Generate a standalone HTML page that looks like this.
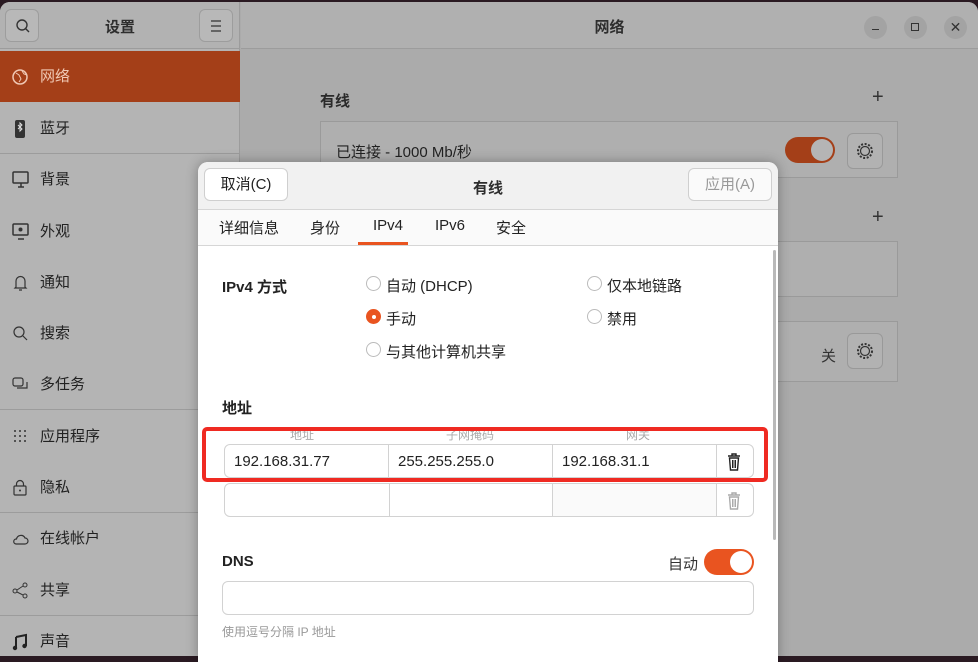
<!DOCTYPE html>
<html><head><meta charset="utf-8"><style>
*{box-sizing:border-box;margin:0;padding:0}
body{width:978px;height:656px;overflow:hidden;background:#2a1a22;font-family:"Liberation Sans","Noto Sans CJK SC",sans-serif;position:relative;color:#222}
.win{position:absolute;left:0;top:2px;width:978px;height:654px;background:#ababab;border-radius:10px 10px 0 0;overflow:hidden}
.side{position:absolute;left:0;top:0;width:240px;height:654px;background:#b4b4b4;border-right:1px solid #9c9c9c}
.sh{height:47px;border-bottom:1px solid #9c9c9c;background:#b2b2b2;position:relative}
.btn{position:absolute;width:34px;height:33px;border:1px solid #9d9d9d;border-radius:6px;background:#b8b8b8}
.sh .t{position:absolute;left:0;width:240px;top:14px;text-align:center;font-size:15px;font-weight:bold;color:#2e2e2e}
.row{position:absolute;left:0;width:240px;height:51px;font-size:15px;color:#222}
.row span{position:absolute;left:40px;top:14px}
.row svg{position:absolute;left:12px;top:17px}
.sep{position:absolute;left:0;width:240px;height:1px;background:#9c9c9c}
.mh{position:absolute;left:241px;top:0;right:0;height:47px;border-bottom:1px solid #9c9c9c;background:#b0b0b0}
.card{position:absolute;left:320px;width:578px;border:1px solid #9a9a9a;background:#afafaf}
.gear{position:absolute;width:36px;height:36px;border:1px solid #999;border-radius:6px;background:#b2b2b2}
.dlg{position:absolute;left:198px;top:162px;width:580px;height:500px;background:#fff;border-radius:10px 10px 0 0;overflow:hidden;box-shadow:0 0 12px rgba(0,0,0,.3)}
.dh{height:48px;background:#f1f1f1;border-bottom:1px solid #d6d6d6;position:relative}
.db{position:absolute;top:6px;height:33px;border:1px solid #cfcfcf;border-radius:6px;background:#fff;font-size:15px;text-align:center;line-height:31px}
.tabs{height:36px;background:#fafafa;border-bottom:1px solid #d6d6d6;position:relative;font-size:15px}
.tabs span{position:absolute;top:7px}
.radio{position:absolute;width:15px;height:15px;border:1px solid #bbb;border-radius:50%;background:#fff}
.lbl{position:absolute;font-size:15px}
.inp{position:absolute;border:1px solid #d2d2d2;background:#fff;font-size:15px}
</style></head><body>
<div class="win">
<div class="side">
 <div class="sh">
  <div class="btn" style="left:5px;top:7px"><svg width="34" height="33"><circle cx="16" cy="15" r="5" fill="none" stroke="#333" stroke-width="1.4"/><line x1="19.5" y1="18.5" x2="23" y2="22" stroke="#333" stroke-width="1.4"/></svg></div>
  <div class="t">设置</div>
  <div class="btn" style="left:199px;top:7px"><svg width="34" height="33"><path d="M11 11h10M11 16h10M11 21h10" stroke="#333" stroke-width="1.3"/></svg></div>
 </div>
 <div class="row" style="top:49px;background:#a43f18;color:#f0c8b4"><svg width="20" height="20"><circle cx="8" cy="9" r="7" fill="none" stroke="#f0c8b4" stroke-width="1.5"/><path d="M4 5l3 2 2 4-2 3M10 3l2 3 3 1" stroke="#f0c8b4" fill="none"/></svg><span>网络</span></div>
 <div class="row" style="top:101px"><svg width="20" height="20"><rect x="3" y="0" width="10" height="18" rx="2" fill="#333"/><path d="M6 5l4 4-2 2V3l2 2-4 4" stroke="#ddd" fill="none"/></svg><span>蓝牙</span></div>
 <div class="sep" style="top:151px"></div>
 <div class="row" style="top:152px"><svg width="20" height="20"><rect x="1" y="1" width="15" height="11" rx="1" fill="none" stroke="#333" stroke-width="1.5"/><path d="M6 16h6M9 12v4" stroke="#333" stroke-width="1.5"/></svg><span>背景</span></div>
 <div class="row" style="top:204px"><svg width="20" height="20"><rect x="1" y="1" width="15" height="11" rx="1" fill="none" stroke="#333" stroke-width="1.5"/><circle cx="8.5" cy="6.5" r="2" fill="#333"/><path d="M6 16h6" stroke="#333" stroke-width="1.5"/></svg><span>外观</span></div>
 <div class="row" style="top:255px"><svg width="20" height="20"><path d="M4 13V7a4.5 4.5 0 019 0v6l1 1H3zM7 16h3" fill="none" stroke="#333" stroke-width="1.2"/></svg><span>通知</span></div>
 <div class="row" style="top:306px"><svg width="20" height="20"><circle cx="7" cy="7" r="5" fill="none" stroke="#333" stroke-width="1.2"/><line x1="11" y1="11" x2="15" y2="15" stroke="#333" stroke-width="1.2"/></svg><span>搜索</span></div>
 <div class="row" style="top:357px"><svg width="20" height="20"><rect x="1" y="2" width="10" height="8" rx="2" fill="none" stroke="#333" stroke-width="1.2"/><path d="M5 12h10V6" fill="none" stroke="#333" stroke-width="1.2"/></svg><span>多任务</span></div>
 <div class="sep" style="top:407px"></div>
 <div class="row" style="top:409px"><svg width="20" height="20"><g fill="#333"><circle cx="3" cy="3" r="1"/><circle cx="8" cy="3" r="1"/><circle cx="13" cy="3" r="1"/><circle cx="3" cy="8" r="1"/><circle cx="8" cy="8" r="1"/><circle cx="13" cy="8" r="1"/><circle cx="3" cy="13" r="1"/><circle cx="8" cy="13" r="1"/><circle cx="13" cy="13" r="1"/></g></svg><span>应用程序</span></div>
 <div class="row" style="top:460px"><svg width="20" height="20"><rect x="2" y="7" width="12" height="9" rx="1" fill="none" stroke="#333" stroke-width="1.2"/><path d="M4.5 7V5a3.5 3.5 0 017 0v2" fill="none" stroke="#333" stroke-width="1.2"/><circle cx="8" cy="11.5" r="1" fill="#333"/></svg><span>隐私</span></div>
 <div class="sep" style="top:510px"></div>
 <div class="row" style="top:511px"><svg width="20" height="20"><path d="M4 14h9a3 3 0 000-6 4.5 4.5 0 00-8.5 1A2.5 2.5 0 004 14z" fill="none" stroke="#333" stroke-width="1.2"/></svg><span>在线帐户</span></div>
 <div class="row" style="top:563px"><svg width="20" height="20"><circle cx="3" cy="9" r="2" fill="none" stroke="#333"/><circle cx="13" cy="3" r="2" fill="none" stroke="#333"/><circle cx="13" cy="14" r="2" fill="none" stroke="#333"/><path d="M5 8l6-4M5 10l6 3" stroke="#333"/></svg><span>共享</span></div>
 <div class="sep" style="top:613px"></div>
 <div class="row" style="top:614px"><svg width="20" height="20"><path d="M4 4l10-2v11M4 4v11" stroke="#222" stroke-width="2" fill="none"/><circle cx="3" cy="15" r="2.2" fill="#222"/><circle cx="12.5" cy="13" r="2.2" fill="#222"/></svg><span>声音</span></div>
</div>
<div class="mh">
 <div style="position:absolute;left:0;width:737px;top:14px;text-align:center;font-size:15px;font-weight:bold;color:#2e2e2e">网络</div>
 <div style="position:absolute;left:623px;top:14px;width:23px;height:23px;border-radius:50%;background:#a3a3a3"><div style="position:absolute;left:8px;top:13px;width:7px;height:1.4px;background:#333"></div></div>
 <div style="position:absolute;left:663px;top:14px;width:23px;height:23px;border-radius:50%;background:#a3a3a3"><div style="position:absolute;left:7px;top:7px;width:8px;height:8px;border:1.4px solid #333"></div></div>
 <div style="position:absolute;left:703px;top:14px;width:23px;height:23px;border-radius:50%;background:#a3a3a3;text-align:center;line-height:22px;font-size:14px;color:#333">✕</div>
</div>
<div style="position:absolute;left:320px;top:88px;font-size:15px;font-weight:bold;color:#2a2a2a">有线</div>
<div style="position:absolute;left:872px;top:84px;font-size:20px;color:#333">+</div>
<div class="card" style="top:119px;height:57px">
 <div style="position:absolute;left:15px;top:19px;font-size:15px">已连接 - 1000 Mb/秒</div>
 <div style="position:absolute;left:464px;top:15px;width:50px;height:26px;border-radius:13px;background:#a43f18"><div style="position:absolute;right:2px;top:2px;width:22px;height:22px;border-radius:50%;background:#b5b5b5"></div></div>
 <div class="gear" style="left:526px;top:11px"><svg width="36" height="36"><circle cx="17" cy="17" r="7" fill="none" stroke="#333" stroke-width="2" stroke-dasharray="2 1.6"/><circle cx="17" cy="17" r="4.5" fill="none" stroke="#333" stroke-width="1.2"/></svg></div>
</div>
<div style="position:absolute;left:872px;top:204px;font-size:20px;color:#333">+</div>
<div class="card" style="top:239px;height:56px"></div>
<div class="card" style="top:319px;height:61px">
 <div style="position:absolute;left:500px;top:23px;font-size:15px;color:#333">关</div>
 <div class="gear" style="left:526px;top:11px"><svg width="36" height="36"><circle cx="17" cy="17" r="7" fill="none" stroke="#333" stroke-width="2" stroke-dasharray="2 1.6"/><circle cx="17" cy="17" r="4.5" fill="none" stroke="#333" stroke-width="1.2"/></svg></div>
</div>
</div>

<div class="dlg">
 <div class="dh">
  <div class="db" style="left:6px;width:84px;color:#222">取消(C)</div>
  <div style="position:absolute;left:0;width:580px;top:15px;text-align:center;font-size:15px;font-weight:bold;color:#2e2e2e">有线</div>
  <div class="db" style="left:490px;width:84px;color:#999;background:#fafafa">应用(A)</div>
 </div>
 <div class="tabs">
  <span style="left:21px">详细信息</span><span style="left:112px">身份</span><span style="left:175px">IPv4</span><span style="left:237px">IPv6</span><span style="left:298px">安全</span>
  <div style="position:absolute;left:160px;top:32px;width:50px;height:3px;background:#e95420"></div>
 </div>
 <div style="position:absolute;right:2px;top:88px;width:3px;height:290px;background:#b9b9b9;border-radius:2px"></div>
 <div class="lbl" style="left:24px;top:114px;font-weight:bold">IPv4 方式</div>
 <div class="radio" style="left:168px;top:114px"></div><div class="lbl" style="left:188px;top:113px">自动 (DHCP)</div>
 <div class="radio" style="left:389px;top:114px"></div><div class="lbl" style="left:409px;top:113px">仅本地链路</div>
 <div class="radio" style="left:168px;top:147px;background:#e95420;border-color:#e95420"><div style="position:absolute;left:4.5px;top:4.5px;width:4px;height:4px;border-radius:50%;background:#fff"></div></div><div class="lbl" style="left:188px;top:146px">手动</div>
 <div class="radio" style="left:389px;top:147px"></div><div class="lbl" style="left:409px;top:146px">禁用</div>
 <div class="radio" style="left:168px;top:180px"></div><div class="lbl" style="left:188px;top:179px">与其他计算机共享</div>
 <div class="lbl" style="left:24px;top:235px;font-weight:bold">地址</div>
 <div style="position:absolute;left:92px;top:264px;font-size:12px;color:#aaa">地址</div>
 <div style="position:absolute;left:248px;top:264px;font-size:12px;color:#aaa">子网掩码</div>
 <div style="position:absolute;left:428px;top:264px;font-size:12px;color:#aaa">网关</div>
 <div class="inp" style="left:26px;top:282px;width:530px;height:34px;border-radius:6px">
  <div style="position:absolute;left:0;top:0;width:164px;height:32px;border-right:1px solid #d2d2d2;padding:8px 0 0 9px">192.168.31.77</div>
  <div style="position:absolute;left:164px;top:0;width:164px;height:32px;border-right:1px solid #d2d2d2;padding:8px 0 0 9px">255.255.255.0</div>
  <div style="position:absolute;left:328px;top:0;width:164px;height:32px;border-right:1px solid #d2d2d2;padding:8px 0 0 9px">192.168.31.1</div>
  <svg style="position:absolute;left:501px;top:8px" width="16" height="18"><path d="M2 3h12M6 3V1h4v2M3.5 5h9l-1 12h-7z" fill="none" stroke="#222" stroke-width="1.4"/><path d="M6.5 7v8M8 7v8M9.5 7v8" stroke="#222"/></svg>
 </div>
 <div class="inp" style="left:26px;top:321px;width:530px;height:34px;border-radius:6px">
  <div style="position:absolute;left:164px;top:0;width:164px;height:32px;border-left:1px solid #d2d2d2;border-right:1px solid #d2d2d2"></div>
  <div style="position:absolute;left:328px;top:0;width:164px;height:32px;background:#fafafa;border-right:1px solid #d2d2d2"></div>
  <svg style="position:absolute;left:501px;top:8px" width="16" height="18"><path d="M2 3h12M6 3V1h4v2M3.5 5h9l-1 12h-7z" fill="none" stroke="#aaa" stroke-width="1.4"/><path d="M6.5 7v8M8 7v8M9.5 7v8" stroke="#aaa"/></svg>
 </div>
 <div style="position:absolute;left:4px;top:265px;width:566px;height:55px;border:4px solid #ef2a22;border-radius:5px"></div>
 <div class="lbl" style="left:24px;top:391px;font-weight:bold">DNS</div>
 <div class="lbl" style="left:470px;top:391px;color:#333">自动</div>
 <div style="position:absolute;left:506px;top:387px;width:50px;height:26px;border-radius:13px;background:#e95420"><div style="position:absolute;right:2px;top:2px;width:22px;height:22px;border-radius:50%;background:#fff"></div></div>
 <div class="inp" style="left:24px;top:419px;width:532px;height:34px;border-radius:6px"></div>
 <div style="position:absolute;left:24px;top:461px;font-size:12px;color:#999">使用逗号分隔 IP 地址</div>
</div>
</body></html>
